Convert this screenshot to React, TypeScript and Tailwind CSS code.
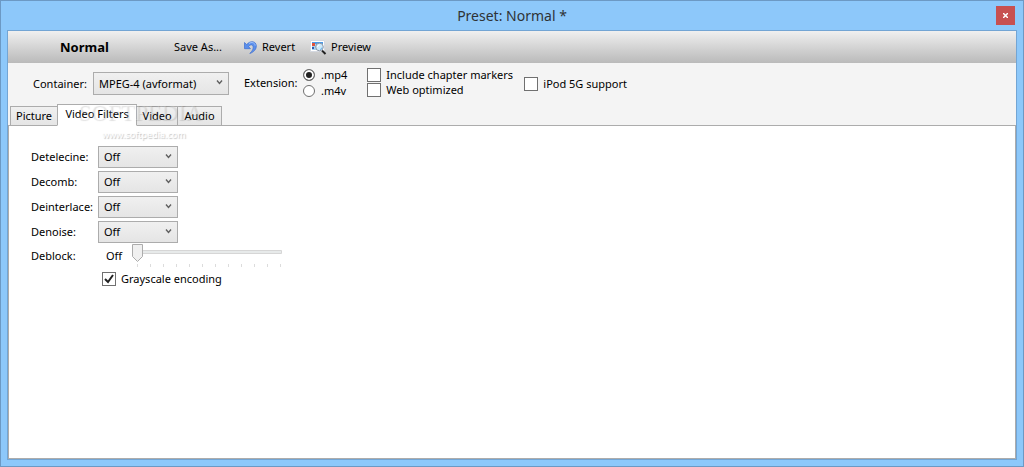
import { useState, type ReactNode } from "react";
import clsx from "clsx";

const TABS = ["Picture", "Video Filters", "Video", "Audio"];
const FILTERS = ["Detelecine", "Decomb", "Deinterlace", "Denoise"];
const TICKS = Array.from({ length: 12 }, (_, i) => i);

interface DropdownProps {
  id: string;
  options: string[];
  className?: string;
}

function Dropdown({ id, options, className }: DropdownProps) {
  return (
    <div className={clsx("relative", className)}>
      <select
        id={id}
        className="block h-full w-full appearance-none border border-[#acacac] bg-linear-to-b from-[#f0f0f0] to-[#e5e5e5] pl-[5px] pr-5 text-black outline-none"
      >
        {options.map((o) => (
          <option key={o}>{o}</option>
        ))}
      </select>
      <svg className="pointer-events-none absolute right-[6px] top-2" width="7" height="5" viewBox="0 0 7 5" fill="none" stroke="#606060" strokeWidth="1.4">
        <path d="M1 .5l2.500 3L6 .5" />
      </svg>
    </div>
  );
}

function CheckBox({ label, defaultChecked }: { label: string; defaultChecked?: boolean }) {
  return (
    <label className="flex h-[15px] items-center gap-[5px]">
      <span className="relative h-[14px] w-[14px]">
        <input
          type="checkbox"
          defaultChecked={defaultChecked}
          className="peer block h-[14px] w-[14px] appearance-none border border-[#707070] bg-white"
        />
        <svg className="pointer-events-none absolute inset-0 hidden peer-checked:block" width="14" height="14" viewBox="0 0 14 14" fill="none" stroke="#212121" strokeWidth="2">
          <path d="M3 7l3 3 5-7" />
        </svg>
      </span>
      {label}
    </label>
  );
}

function Radio({ label, defaultChecked }: { label: string; defaultChecked?: boolean }) {
  return (
    <label className="flex h-4 items-center gap-[6px]">
      <input
        type="radio"
        name="extension"
        defaultChecked={defaultChecked}
        className="h-3 w-3 appearance-none rounded-full border border-[#707070] bg-white checked:bg-[#212121] checked:shadow-[inset_0_0_0_2px_#fff]"
      />
      {label}
    </label>
  );
}

function ToolButton({ icon, children }: { icon?: ReactNode; children: ReactNode }) {
  return (
    <button type="button" className="flex items-center gap-1">
      {icon}
      {children}
    </button>
  );
}

function RevertIcon() {
  return (
    <svg width="15" height="15" viewBox="0 0 15 15">
      <path
        d="M1.500 2.500v6.200h6L5.600 6.600C7 4.600 9.300 4.300 10 6.200c.8 2.300-.7 4.800-3.200 7.300C10.500 12.300 13.400 9.500 13.300 6 13.200 1.300 7.600-.2 3.700 4.600z"
        fill="#5b8fec"
        stroke="#3d6fcf"
        strokeWidth=".7"
      />
      <path d="M6 3.600c2.600-2.100 5.900-1 6.200 2" fill="none" stroke="#9dc0fb" />
    </svg>
  );
}

function PreviewIcon() {
  return (
    <svg width="17" height="16" viewBox="0 0 17 16">
      <path d="M.5 1.500h14v11H.5z" fill="#fff" stroke="#d4d8e0" />
      <path d="M2 3h11v2H2z" fill="#4c9ae6" />
      <path d="M2 5h5v6H2z" fill="#a5d0f2" />
      <path d="M2 4h3v3H2z" fill="#e0523c" />
      <path d="M2 8h2v2H2z" fill="#2b5db0" />
      <path d="M12 11.500l3.500 3.500" stroke="#222" strokeWidth="2" />
      <circle cx="9.500" cy="8" r="3.800" fill="#cdeafb" stroke="#9098a5" />
      <path d="M7.500 8a2 2 0 0 1 2-2" fill="none" stroke="#fff" />
      <path d="M10 10.500a2 2 0 0 0 2-2" fill="none" stroke="#6bb4ec" />
    </svg>
  );
}

function DeblockSlider() {
  const [value, setValue] = useState(0);

  return (
    <div className="relative h-6 w-[151px]">
      <svg width="151" height="24" viewBox="0 0 151 24">
        <path d="M1.500 6.500h148v3H1.500z" fill="#e7eaea" stroke="#d6d6d6" />
        {TICKS.map((i) => (
          <path key={i} d={`M${5.5 + i * 13} 20v3`} stroke="#dcdcdc" />
        ))}
        <path transform={`translate(${value * 13} 0)`} d="M.5.5h10v12l-5 5-5-5z" fill="#f0f0f0" stroke="#acacac" />
      </svg>
      <input
        id="deblock"
        type="range"
        min={0}
        max={11}
        value={value}
        onChange={(e) => setValue(Number(e.target.value))}
        className="absolute inset-0 h-full w-full opacity-0"
      />
    </div>
  );
}

function Watermark() {
  return (
    <div aria-hidden className="pointer-events-none flex flex-col items-center leading-none whitespace-nowrap">
      <div className="font-['Liberation_Serif',serif] text-[23px] leading-6 text-white/20 [text-shadow:1px_1px_1px_rgba(0,0,0,0.12)]">
        SOFTPEDIA<sup className="text-[8px]">™</sup>
      </div>
      <div className="mt-[5px] text-[9px] text-white [text-shadow:1px_1px_1px_rgba(0,0,0,0.25)]">www.softpedia.com</div>
    </div>
  );
}

export default function App() {
  const [tab, setTab] = useState("Video Filters");

  return (
    <div className="flex min-h-screen flex-col border border-[#6c99c4] bg-[#8dc8fa] px-[6px] pb-[6px] font-['Noto_Sans','Segoe_UI',sans-serif] text-[11px] leading-4 text-black">
      <header className="grid h-[29px] grid-cols-[1fr_auto_1fr] items-center">
        <h1 className="col-start-2 text-[14px] text-[#2f3336]">Preset: Normal *</h1>
        <button
          type="button"
          aria-label="Close"
          className="mr-[2px] flex h-[19px] w-[19px] items-center justify-center justify-self-end bg-[#c75050]"
        >
          <svg width="5" height="5" viewBox="0 0 5 5" stroke="#fff" strokeWidth="1.500">
            <path d="M0 0l5 5M5 0L0 5" />
          </svg>
        </button>
      </header>

      <div className="flex flex-1 flex-col border border-[#73a5d4] bg-[#f4f4f4]">
        <div className="flex h-8 items-center bg-linear-to-b from-[#f0f0f0] to-[#bababa] pl-[52px]">
          <h2 className="w-[114px] text-[13px] font-bold">Normal</h2>
          <div className="flex items-center">
            <div className="w-[69px]">
              <ToolButton>Save As...</ToolButton>
            </div>
            <div className="w-[67px]">
              <ToolButton icon={<RevertIcon />}>Revert</ToolButton>
            </div>
            <ToolButton icon={<PreviewIcon />}>Preview</ToolButton>
          </div>
        </div>

        <div className="flex h-[41px] items-center pl-[25px]">
          <label htmlFor="container" className="w-[60px]">
            Container:
          </label>
          <Dropdown id="container" options={["MPEG-4 (avformat)", "MKV (avformat)"]} className="h-[23px] w-[136px]" />
          <fieldset className="ml-[15px] flex items-center pb-[2px]">
            <span className="w-[59px]">Extension:</span>
            <div>
              <Radio label=".mp4" defaultChecked />
              <Radio label=".m4v" />
            </div>
          </fieldset>
          <div className="ml-5 w-[157px] pb-[2px]">
            <CheckBox label="Include chapter markers" />
            <CheckBox label="Web optimized" />
          </div>
          <CheckBox label="iPod 5G support" />
        </div>

        <div className="relative flex flex-1 flex-col">
          <div role="tablist" className="flex h-[22px] items-end pl-[2px]">
            {TABS.map((t) => (
              <button
                key={t}
                type="button"
                role="tab"
                aria-selected={tab === t}
                onClick={() => setTab(t)}
                className={clsx(
                  "-mr-px border border-[#acacac]",
                  tab === t
                    ? "z-10 h-[22px] border-b-white bg-white px-[7px] pb-[2px]"
                    : "h-5 bg-linear-to-b from-[#f0f0f0] to-[#e5e5e5] px-[5px]",
                  t === "Picture" && "min-w-12",
                  t === "Video Filters" && "min-w-20",
                  t === "Video" && "min-w-[42px]",
                  t === "Audio" && "min-w-[45px]",
                )}
              >
                {t}
              </button>
            ))}
          </div>
          <div role="tabpanel" className="-mt-px flex-1 border border-[#acacac] bg-white pl-[22px] pt-5">
            <div className="grid grid-cols-[67px_1fr] items-center gap-y-[3px]">
              {FILTERS.map((name) => (
                <div key={name} className="contents">
                  <label htmlFor={name}>{name}:</label>
                  <Dropdown id={name} options={["Off", "Default", "Custom"]} className="h-[22px] w-20" />
                </div>
              ))}
            </div>
            <div className="flex h-[26px] items-center">
              <label htmlFor="deblock" className="w-[75px]">
                Deblock:
              </label>
              <span className="w-[26px]">Off</span>
              <DeblockSlider />
            </div>
            <div className="pl-[71px] pt-[2px]">
              <CheckBox label="Grayscale encoding" defaultChecked />
            </div>
          </div>
          <div className="pointer-events-none absolute left-[70px] top-[-3px] z-20">
            <Watermark />
          </div>
        </div>
      </div>
    </div>
  );
}
